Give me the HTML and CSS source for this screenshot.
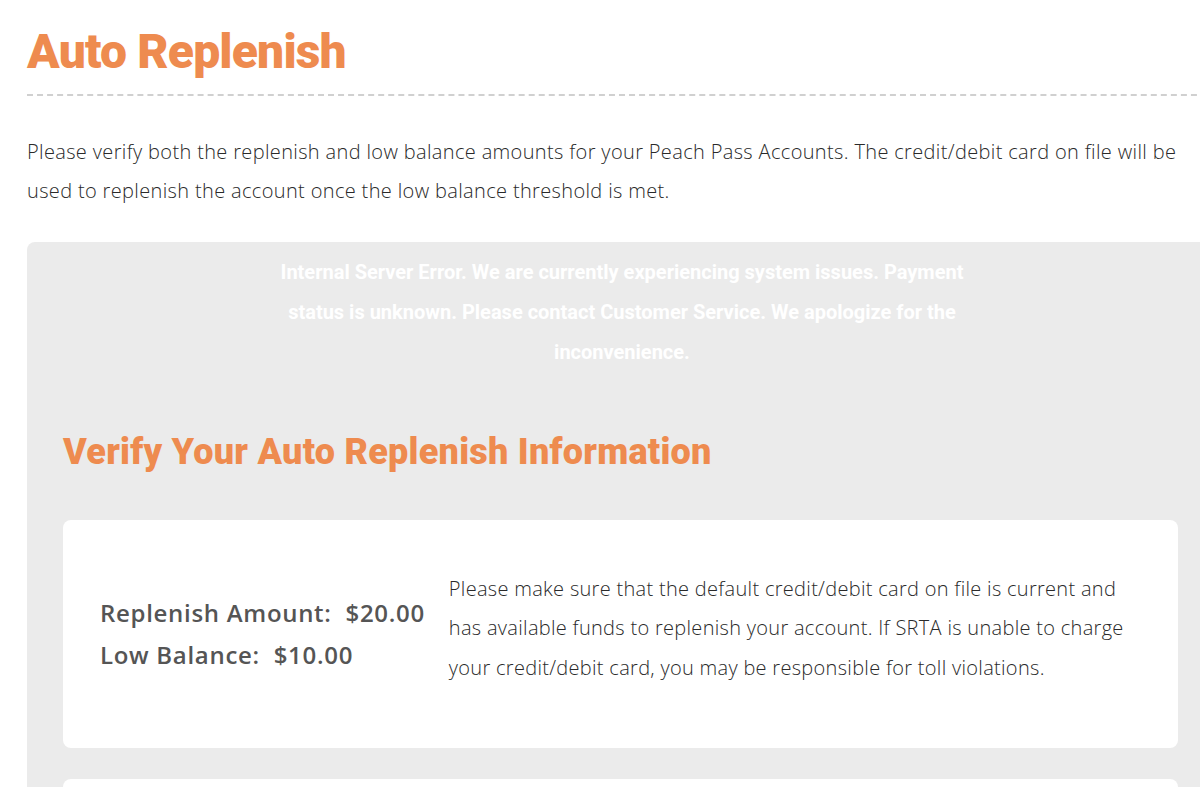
FILE: index.html
```html
<!DOCTYPE html>
<html lang="en">
<head>
<meta charset="utf-8">
<title>Auto Replenish</title>
<link rel="stylesheet" href="styles.css">
</head>
<body>
<main class="page">
  <h1 class="page-title">Auto Replenish</h1>
  <hr class="divider">
  <p class="intro">Please verify both the replenish and low balance amounts for your Peach Pass Accounts. The credit/debit card on file will be used to replenish the account once the low balance threshold is met.</p>
  <section class="panel">
    <p class="error-msg">Internal Server Error. We are currently experiencing system issues. Payment status is unknown. Please contact Customer Service. We apologize for the inconvenience.</p>
    <h2 class="section-title">Verify Your Auto Replenish Information</h2>
    <div class="card info-card">
      <div class="amounts">
        <div class="amount-row">Replenish Amount:&nbsp; $20.00</div>
        <div class="amount-row">Low Balance:&nbsp; $10.00</div>
      </div>
      <p class="notice">Please make sure that the default credit/debit card on file is current and has available funds to replenish your account. If SRTA is unable to charge your credit/debit card, you may be responsible for toll violations.</p>
    </div>
    <div class="card next-card"></div>
  </section>
</main>
</body>
</html>
```

FILE: styles.css
```css
html {
  overflow: hidden;
}
body {
  margin: 0;
  background: #ffffff;
  font-family: "Open Sans", "Lato", sans-serif;
  color: #333;
}
.page {
  padding: 0 0 0 27px;
  width: 1190px;
}
.page-title {
  margin: 0;
  padding-top: 24px;
  font-family: "Roboto", "Lato", sans-serif;
  font-weight: 900;
  font-size: 48px;
  line-height: 56px;
  letter-spacing: -0.8px;
  color: #ee8b4f;
}
.divider {
  margin: 14px 0 0 0;
  border: 0;
  border-top: 2px dashed #d0d0d0;
  height: 0;
}
.intro {
  margin: 36px 0 0 0;
  font-size: 20px;
  line-height: 39px;
  font-weight: 300;
  letter-spacing: 0.35px;
  color: #2a2a2a;
  width: 1160px;
}
.panel {
  margin-top: 32px;
  background: #ebebeb;
  border-radius: 8px 0 0 0;
  padding: 10px 0 40px 36px;
}
.error-msg {
  margin: 0 auto;
  width: 700px;
  text-align: center;
  color: #ffffff;
  font-family: "Liberation Sans Narrow", "Roboto", sans-serif;
  font-weight: 700;
  font-size: 20px;
  line-height: 40px;
  transform: translateX(-18px);
}
.section-title {
  margin: 58px 0 0 0;
  font-family: "Roboto", "Lato", sans-serif;
  font-weight: 900;
  font-size: 36px;
  line-height: 44px;
  letter-spacing: 0.25px;
  color: #ee8b4f;
}
.card {
  background: #ffffff;
  border-radius: 8px;
  width: 1115px;
}
.info-card {
  margin-top: 46px;
  height: 228px;
  box-sizing: border-box;
  display: flex;
  align-items: center;
  padding: 0 20px 0 37px;
  gap: 24px;
}
.amounts {
  flex: none;
  font-size: 24px;
  font-weight: 600;
  letter-spacing: 0.7px;
  color: #555;
  line-height: 42px;
}
.notice {
  flex: none;
  width: 692px;
  margin: 0 0 12px 0;
  font-size: 20px;
  line-height: 39.5px;
  font-weight: 300;
  letter-spacing: 0.3px;
  color: #2a2a2a;
}
.next-card {
  margin-top: 31px;
  height: 80px;
}
```
